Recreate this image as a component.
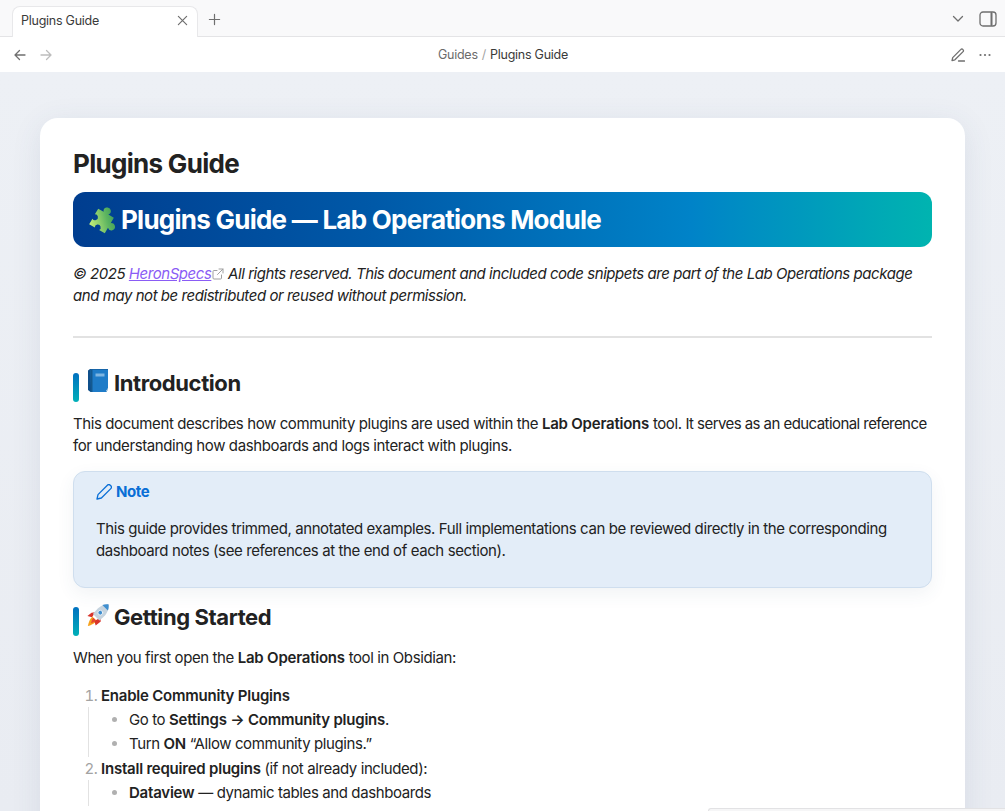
<div class="window">
  <header class="tabbar">
    <div class="tab">
      <span class="tab-title">Plugins Guide</span>
      <svg class="tab-close" width="11" height="11" viewBox="0 0 12 12"><path d="M1.500 1.500l9 9M10.500 1.500l-9 9" /></svg>
    </div>
    <svg class="tab-new" width="13" height="13" viewBox="0 0 14 14"><path d="M7 1.500v11M1.500 7h11" /></svg>
    <div class="tabbar-right">
      <svg class="chev" width="12" height="8" viewBox="0 0 12 8"><path d="M1.500 1.500L6 6l4.500-4.500" /></svg>
      <svg class="sidebar" width="18" height="16" viewBox="0 0 18 16"><rect x="1" y="1" width="16" height="14" rx="3" /><path d="M12.500 2v12" stroke-width="2" /></svg>
    </div>
  </header>

  <nav class="navbar">
    <div class="nav-arrows">
      <svg width="12" height="12" viewBox="0 0 12 12"><path d="M11 6H1.500M5.500 1.500L1 6l4.500 4.500" /></svg>
      <svg class="off" width="12" height="12" viewBox="0 0 12 12"><path d="M1 6h9.500M6.500 1.500L11 6l-4.500 4.500" /></svg>
    </div>
    <div class="crumbs"><span class="crumb-parent">Guides</span><span class="crumb-sep">/</span><span>Plugins Guide</span></div>
    <div class="nav-actions">
      <svg width="14" height="14" viewBox="0 0 14 14"><path d="M1 12.600l.7-3L9.900 1.400a1.300 1.300 0 0 1 1.900 0l.3.3a1.300 1.300 0 0 1 0 1.900L3.900 11.800zM7.500 13h6" /></svg>
      <svg class="dots" width="12" height="4" viewBox="0 0 12 4"><circle cx="1.500" cy="2" r="1.100" /><circle cx="6" cy="2" r="1.100" /><circle cx="10.500" cy="2" r="1.100" /></svg>
    </div>
  </nav>

  <main class="workspace">
    <article class="card">
      <h1>Plugins Guide</h1>

      <div class="banner">
        <svg class="emoji" width="30" height="30" viewBox="0 0 30 30">
          <defs><linearGradient id="pz" x1="0" y1="1" x2="1" y2="0"><stop offset="0" stop-color="#c8f07a" /><stop offset="0.55" stop-color="#5cb460" /><stop offset="1" stop-color="#2a8a52" /></linearGradient></defs>
          <path fill="url(#pz)" transform="translate(14.500 16) rotate(30) scale(1.130)" d="M-8 -8H-2.400A3.200 3.200 0 1 1 2.400 -8H8V-2.400A3.200 3.200 0 1 1 8 2.400V8H2.200A2.600 2.600 0 1 0 -2.200 8H-8V2.200A2.600 2.600 0 1 0 -8 -2.200Z" />
        </svg>
        <h2 class="banner-title">Plugins Guide — Lab Operations Module</h2>
      </div>

      <p class="legal">
        <em>© 2025 <a href="#top">HeronSpecs</a><svg class="ext" width="12" height="12" viewBox="0 0 12 12"><path d="M9.500 7v3a1 1 0 0 1-1 1H2a1 1 0 0 1-1-1V3.500a1 1 0 0 1 1-1h3M7 1h4v4M11 1L5.500 6.500" /></svg> All rights reserved. This document and included code snippets are part of the Lab Operations package and may not be redistributed or reused without permission.</em>
      </p>

      <hr />

      <h3 class="section">
        <svg class="emoji" width="24" height="26" viewBox="0 0 24 26">
          <path fill="#0f4f8a" d="M2 2.500L4 1h18v20l-2 3H4.500L2 22z" />
          <path fill="#1f7cc8" d="M4.500 1.500H22V21l-1.500 3H5z" />
          <path fill="#14598f" d="M4.500 1.500h2V24h-1.500z" />
          <path fill="#d8e2ea" d="M20.500 22.300L22 20v1l-1.500 3z" />
          <path fill="#7fb6e2" d="M9.500 5.500h9v3h-9z" />
        </svg>
        <span>Introduction</span>
      </h3>
      <p>This document describes how community plugins are used within the <strong>Lab Operations</strong> tool. <span class="tight">It serves as an educational reference</span> for understanding how dashboards and logs interact with plugins.</p>

      <aside class="callout">
        <div class="callout-title">
          <svg width="16" height="16" viewBox="0 0 16 16"><path d="M1 15l1-4.400L11.400 1.200a2 2 0 0 1 2.800 0l.6.600a2 2 0 0 1 0 2.800L5.400 14z" /></svg>
          <span>Note</span>
        </div>
        <p>This guide provides trimmed, annotated examples. Full implementations can be reviewed directly in the corresponding dashboard notes (see references at the end of each section).</p>
      </aside>

      <h3 class="section started">
        <svg class="emoji" width="24" height="24" viewBox="0 0 26 26">
          <path fill="#f6a21c" d="M7 15l4 4c-1 3-5 5-9 6 1-4 2-8 5-10z" />
          <path fill="#e8452f" d="M8 16l2.500 2.500c-1 1.500-3 3-5 3.500.5-2 1-4.500 2.500-6z" />
          <path fill="#d8342b" d="M6 10.500l4-.5-3.500 5.500L1.500 14zM15.500 16l.5 4-5.500 4.500-1.500-5z" />
          <path fill="#c5d3de" d="M24.500 1.500c.5 6-2.500 11-6.500 14.500l-3.500 3L7.500 12l3-3.500C14 4.500 18.500 1 24.500 1.500z" />
          <path fill="#3f8fcf" d="M24.500 1.500c.2 2.500 0 4.700-.8 6.700l-6-6c2-.7 4.300-.9 6.800-.7z" />
          <circle cx="15.500" cy="10.500" r="2.600" fill="#3f8fcf" stroke="#eef3f7" stroke-width="1" />
        </svg>
        <span>Getting Started</span>
      </h3>
      <p>When you first open the <strong>Lab Operations</strong> tool in Obsidian:</p>

      <ol>
        <li>
          <strong>Enable Community Plugins</strong>
          <ul>
            <li>Go to <strong>Settings → Community plugins</strong>.</li>
            <li>Turn <strong>ON</strong> “Allow community plugins.”</li>
          </ul>
        </li>
        <li>
          <strong>Install required plugins</strong> (if not already included):
          <ul>
            <li><strong>Dataview</strong> — dynamic tables and dashboards</li>
          </ul>
        </li>
      </ol>
    </article>
  </main>

  <div class="status"></div>
</div>

<style>
  :global(body) {
    margin: 0;
    overflow: hidden;
    background: #ebeef4;
  }
  .window {
    position: relative;
    display: flex;
    flex-direction: column;
    width: 1005px;
    height: 811px;
    overflow: hidden;
    font-family: Inter, "Liberation Sans", sans-serif;
    color: #222222;
  }
  svg {
    flex-shrink: 0;
    fill: none;
    stroke: #6f6f6f;
    stroke-width: 1.300;
    stroke-linecap: round;
    stroke-linejoin: round;
  }
  svg.emoji {
    stroke: none;
  }

  /* tabs */
  .tabbar {
    display: flex;
    align-items: flex-end;
    box-sizing: border-box;
    height: 37px;
    padding-left: 12px;
    background: #f9f9fa;
    border-bottom: 1px solid #e4e4e6;
  }
  .tab {
    display: flex;
    align-items: center;
    justify-content: space-between;
    box-sizing: border-box;
    width: 186px;
    height: 31px;
    margin-bottom: -1px;
    padding: 0 9px 3px 8px;
    background: #ffffff;
    border: 1px solid #e8e8ea;
    border-bottom: none;
    border-radius: 8px 8px 0 0;
  }
  .tab-title {
    font-size: 12.500px;
    letter-spacing: -0.25px;
    color: #3a3a3a;
  }
  .tab-new {
    margin: 0 0 10px 10px;
  }
  .tabbar-right {
    display: flex;
    align-items: center;
    gap: 15px;
    margin-left: auto;
    margin-right: 8px;
    margin-bottom: 9px;
  }

  /* nav */
  .navbar {
    position: relative;
    display: flex;
    align-items: center;
    justify-content: space-between;
    box-sizing: border-box;
    height: 35px;
    padding: 0 14px;
    background: #ffffff;
  }
  .nav-arrows {
    display: flex;
    gap: 14px;
  }
  .nav-arrows .off {
    stroke: #bdbdbd;
  }
  .crumbs {
    display: flex;
    gap: 4px;
    margin-left: 3px;
    font-size: 12.500px;
    letter-spacing: -0.25px;
    color: #3a3a3a;
  }
  .crumb-parent {
    color: #6b6b6b;
  }
  .crumb-sep {
    color: #a3a3a3;
  }
  .nav-actions {
    display: flex;
    align-items: center;
    gap: 14px;
  }
  .dots {
    fill: #6f6f6f;
    stroke: none;
  }

  /* page */
  .workspace {
    flex: 1;
    min-height: 0;
    padding: 46px 40px 0;
    background: linear-gradient(180deg, #edf0f5, #e9ecf2);
  }
  .card {
    box-sizing: border-box;
    width: 925px;
    min-height: 760px;
    padding: 30px 33px 0;
    background: #ffffff;
    border-radius: 18px 18px 0 0;
    box-shadow: 0 6px 30px rgba(60, 80, 120, 0.1);
    font-size: 15px;
    line-height: 22px;
    letter-spacing: -0.4px;
  }
  h1 {
    margin: 0 0 12px;
    font-size: 26px;
    line-height: 32px;
    font-weight: 700;
    letter-spacing: -0.7px;
    color: #222222;
  }
  .banner {
    display: flex;
    align-items: center;
    gap: 4px;
    box-sizing: border-box;
    height: 55px;
    padding-left: 14px;
    border-radius: 12px;
    background: linear-gradient(90deg, #003d8f 0%, #0059a8 35%, #0083c8 72%, #00b4b0 100%);
  }
  .banner-title {
    margin: 0;
    font-size: 26px;
    line-height: 32px;
    font-weight: 700;
    letter-spacing: -0.75px;
    color: #ffffff;
  }
  p {
    margin: 0;
  }
  .tight {
    letter-spacing: -0.56px;
  }
  .legal {
    margin-top: 16px;
  }
  .legal em {
    letter-spacing: -0.45px;
  }
  .legal a {
    color: #8a5cf5;
    text-decoration: underline;
  }
  .ext {
    margin: 0 0 -1px 1px;
    stroke: #a0a0a0;
    stroke-width: 1;
  }
  hr {
    height: 2px;
    margin: 29px 0 0;
    border: none;
    background: #e2e2e2;
  }
  .section {
    position: relative;
    display: flex;
    align-items: center;
    gap: 4px;
    height: 32px;
    margin: 29px 0 14px;
    padding-left: 13px;
    font-size: 22px;
    line-height: 32px;
    font-weight: 700;
    letter-spacing: -0.4px;
    color: #222222;
  }
  .section::before {
    content: "";
    position: absolute;
    left: 0;
    top: 6px;
    width: 6px;
    height: 29px;
    border-radius: 3px;
    background: linear-gradient(180deg, #0070c0, #00b0b8);
  }
  .section .emoji {
    margin-top: -5px;
  }
  .callout {
    box-sizing: border-box;
    margin-top: 14px;
    height: 117px;
    padding: 9px 22px;
    background: #e3edf8;
    border: 1px solid #cfdeee;
    border-radius: 12px;
    box-shadow: 0 6px 18px rgba(60, 80, 120, 0.07);
  }
  .callout-title {
    display: flex;
    align-items: center;
    gap: 4px;
    margin-bottom: 15px;
    font-weight: 700;
    color: #0a6fd6;
  }
  .callout-title svg {
    stroke: #0a6fd6;
  }
  .started {
    margin-top: 13px;
    margin-bottom: 14px;
  }
  ol {
    margin: 15px 0 0;
    padding: 0 0 0 28px;
  }
  ol > li {
    padding-top: 1px;
  }
  ol > li::marker {
    color: #a3a3a3;
  }
  ul {
    margin: 0 0 0 -13px;
    padding: 2px 0 0 40px;
    border-left: 1px solid #e2e2e2;
    list-style: disc;
  }
  ul li {
    padding-bottom: 2px;
  }
  ul li::marker {
    color: #b0b0b0;
  }
  strong {
    font-weight: 600;
    letter-spacing: -0.22px;
    color: #222222;
  }

  /* status bar peeking in at the bottom */
  .status {
    position: absolute;
    right: 0;
    bottom: 0;
    width: 296px;
    height: 2px;
    background: #f6f6f7;
    border: 1px solid #e2e2e4;
    border-right: none;
    border-bottom: none;
    border-radius: 6px 0 0 0;
  }
</style>
